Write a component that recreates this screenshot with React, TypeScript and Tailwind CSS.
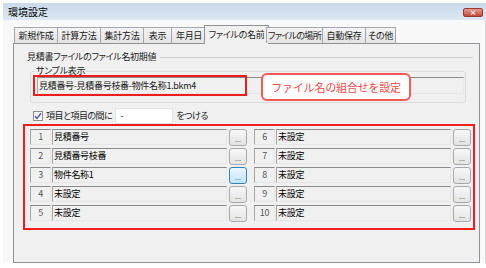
import React from 'react';

const tabs = [
  { label: '新規作成', w: 'w-[44px]' },
  { label: '計算方法', w: 'w-[44px]' },
  { label: '集計方法', w: 'w-[44px]' },
  { label: '表示', w: 'w-[29px]' },
  { label: '年月日', w: 'w-[36px]' },
  { label: 'ファイルの名前', w: 'w-[65px]', active: true },
  { label: 'ファイルの場所', w: 'w-[57px]', narrow: true },
  { label: '自動保存', w: 'w-[44px]' },
  { label: 'その他', w: 'w-[31px]' },
];

const leftRows = [
  { no: 1, name: '見積番号' },
  { no: 2, name: '見積番号枝番' },
  { no: 3, name: '物件名称1', focus: true },
  { no: 4, name: '未設定' },
  { no: 5, name: '未設定' },
];

const rightRows = [6, 7, 8, 9, 10].map((no) => ({ no, name: '未設定', focus: false }));

// sunken edit box, like a disabled Win7 text field
const Field: React.FC<{ className?: string; children?: React.ReactNode }> = ({ className = '', children }) => (
  <div
    className={`h-[16px] border-t border-l border-t-[#8a8a8a] border-l-[#a6a6a6] border-r border-b border-r-[#e6e6e6] border-b-[#e6e6e6] bg-[#f0f0f0] text-[9px] leading-[14px] tracking-[-0.3px] ${className}`}
  >
    {children}
  </div>
);

const DotButton: React.FC<{ focus?: boolean }> = ({ focus }) => (
  <div
    className={`ml-[2px] w-[18px] h-[17px] rounded-[3px] border flex items-end justify-center pb-[2px] text-[7px] leading-[7px] text-[#555] ${
      focus ? 'border-[#3c7fb1] bg-gradient-to-b from-[#eaf6fd] to-[#bee6fd]' : 'border-[#a8a8a8] bg-gradient-to-b from-[#f7f7f7] to-[#e3e3e3]'
    }`}
  >
    ...
  </div>
);

const Row: React.FC<{ no: number; name: string; focus?: boolean }> = ({ no, name, focus }) => (
  <div className="flex items-start h-[16px]">
    <Field className="w-[21px] text-center text-[#555]">{no}</Field>
    <Field className="ml-[1px] w-[175px] pl-[1px] text-black">{name}</Field>
    <DotButton focus={focus} />
  </div>
);

export default function App() {
  return (
    <div
      className="w-[486px] h-[268px] bg-white overflow-hidden text-[#1a1a1a] [font-feature-settings:'palt']"
      style={{ fontFamily: '"Noto Sans CJK JP", "Noto Sans", sans-serif' }}
    >
      <div className="ml-[3px] mt-[3px] w-[483px] h-[259px] flex flex-col">
        {/* Title bar */}
        <div className="relative h-[17px] bg-gradient-to-b from-[#c9daec] to-[#dce7f2] pl-[5px] text-[10px] leading-[17px] text-black">
          環境設定
          <div className="absolute right-[3px] top-[5px] w-[20px] h-[9px] rounded-[2px] bg-gradient-to-b from-[#e49a8f] to-[#c2473a] border border-[#9b3a30] flex items-center justify-center text-white text-[7px] leading-[7px] font-bold">
            ×
          </div>
        </div>

        {/* Window body */}
        <div className="flex-1 flex flex-col bg-[#f8f8f8] pl-[10px] pr-[5px] pt-[5px] border-r border-[#d8d8d8]">
          {/* Tabs */}
          <div className="relative z-10 flex items-end pl-[1px]">
            {tabs.map((t, i) =>
              t.active ? (
                <div
                  key={t.label}
                  className={`${t.w} -ml-[3px] -mr-[2px] -mb-px h-[19px] border border-b-0 border-[#8e9196] bg-[#f0f0f0] text-[9px] leading-[17px] text-center tracking-[-0.3px] whitespace-nowrap`}
                >
                  {t.label}
                </div>
              ) : (
                <div
                  key={t.label}
                  className={`${t.w} ${i === 0 ? '' : '-ml-px'} h-[16px] border border-b-0 border-[#a4a7ac] bg-gradient-to-b from-[#f3f3f3] to-[#e4e4e4] text-[9px] leading-[15px] text-center whitespace-nowrap overflow-hidden ${
                    t.narrow ? 'tracking-[-0.7px]' : 'tracking-[-0.3px]'
                  }`}
                >
                  {t.label}
                </div>
              )
            )}
          </div>

          {/* Tab panel */}
          <div className="h-[220px] border border-[#8e9196] bg-[#f0f0f0] flex flex-col">
            <div className="mt-[7px] h-[12px] flex items-center pl-[13px] pr-[6px]">
              <span className="text-[9px] leading-[12px] tracking-[-0.3px] whitespace-nowrap">見積書ファイルのファイル名初期値</span>
              <div className="flex-1 ml-[4px] border-t border-[#cfcfcf]" />
            </div>

            <fieldset className="ml-[16px] mt-[2px] w-[436px] border border-[#dadada] rounded-[3px] pb-[8px]">
              <legend className="ml-[4px] px-[1px] text-[9px] leading-[12px] tracking-[-0.3px]">サンプル表示</legend>
              <div className="relative ml-[6px] w-[427px]">
                <Field className="w-full h-[17px] pl-[1px] leading-[15px]">見積番号-見積番号枝番-物件名称1.bkm4</Field>
                {/* annotations */}
                <div className="absolute -left-[4px] -top-[2px] w-[214px] h-[21px] border-2 border-[#ee1c1c]" />
                <div className="absolute left-[224px] -top-[4px] w-[150px] h-[28px] rounded-[6px] border-2 border-[#f25a5a] bg-white flex items-center justify-center text-[11px] text-[#ef4a4a] tracking-[-0.2px] [font-feature-settings:normal]">
                  ファイル名の組合せを設定
                </div>
              </div>
            </fieldset>

            <div className="mt-[5px] h-[16px] flex items-center pl-[19px] text-[9px] tracking-[-0.5px]">
              <div className="w-[10px] h-[10px] border border-[#8f8f8f] bg-gradient-to-br from-[#eeeeee] to-white flex items-center justify-center">
                <svg width="8" height="8" viewBox="0 0 8 8">
                  <path d="M1 4.2 L3 6.4 L7 1.2" fill="none" stroke="#3b5fa0" strokeWidth="1.4" />
                </svg>
              </div>
              <span className="ml-[3px]">項目と項目の間に</span>
              <div className="ml-[3px] w-[58px] h-[16px] bg-white border border-[#e2e2e2] pl-[4px] leading-[14px]">-</div>
              <span className="ml-[3px]">をつける</span>
            </div>

            <div className="ml-[9px] w-[452px] h-[106px] border-2 border-[#ee1c1c] pt-[3px] pl-[5px] flex gap-[7px]">
              <div className="flex flex-col gap-[3px]">
                {leftRows.map((r) => (
                  <Row key={r.no} {...r} />
                ))}
              </div>
              <div className="flex flex-col gap-[3px]">
                {rightRows.map((r) => (
                  <Row key={r.no} {...r} />
                ))}
              </div>
            </div>
          </div>
        </div>
      </div>
    </div>
  );
}
